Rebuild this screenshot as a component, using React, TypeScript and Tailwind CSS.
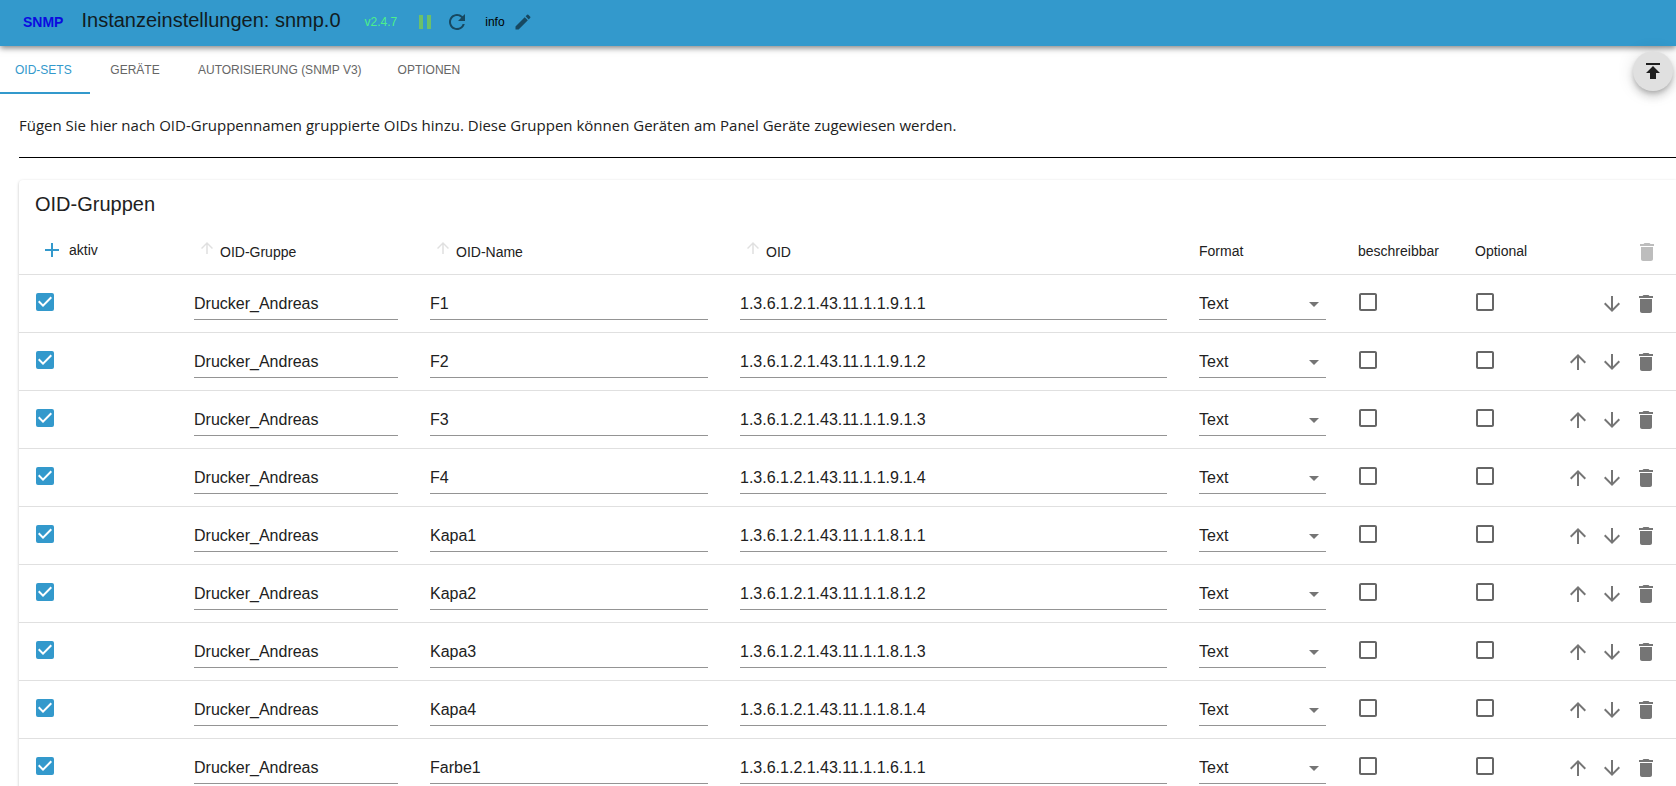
import React, { useState } from 'react';
import {
  MdAdd,
  MdArrowDownward,
  MdArrowDropDown,
  MdArrowUpward,
  MdCheckBox,
  MdCheckBoxOutlineBlank,
  MdDelete,
  MdEdit,
  MdPause,
  MdPublish,
  MdRefresh,
} from 'react-icons/md';

interface OidRow {
  id: number;
  active: boolean;
  group: string;
  name: string;
  oid: string;
  format: string;
  writable: boolean;
  optional: boolean;
}

const createRow = (id: number, name: string, oid: string): OidRow => ({
  id,
  active: true,
  group: 'Drucker_Andreas',
  name,
  oid,
  format: 'Text',
  writable: false,
  optional: false,
});

const INITIAL_ROWS: OidRow[] = [
  createRow(1, 'F1', '1.3.6.1.2.1.43.11.1.1.9.1.1'),
  createRow(2, 'F2', '1.3.6.1.2.1.43.11.1.1.9.1.2'),
  createRow(3, 'F3', '1.3.6.1.2.1.43.11.1.1.9.1.3'),
  createRow(4, 'F4', '1.3.6.1.2.1.43.11.1.1.9.1.4'),
  createRow(5, 'Kapa1', '1.3.6.1.2.1.43.11.1.1.8.1.1'),
  createRow(6, 'Kapa2', '1.3.6.1.2.1.43.11.1.1.8.1.2'),
  createRow(7, 'Kapa3', '1.3.6.1.2.1.43.11.1.1.8.1.3'),
  createRow(8, 'Kapa4', '1.3.6.1.2.1.43.11.1.1.8.1.4'),
  createRow(9, 'Farbe1', '1.3.6.1.2.1.43.11.1.1.6.1.1'),
];

const TABS = ['OID-Sets', 'Geräte', 'Autorisierung (SNMP v3)', 'Optionen'];

interface CheckboxCellProps {
  label: string;
  checked: boolean;
  onChange: (checked: boolean) => void;
}

const CheckboxCell: React.FC<CheckboxCellProps> = ({ label, checked, onChange }) => (
  <td className="border-b border-[#e0e0e0] pt-[15px] pl-[14px] align-top">
    <label className="grid size-6 cursor-pointer">
      <input
        type="checkbox"
        aria-label={label}
        checked={checked}
        onChange={(e) => onChange(e.target.checked)}
        className="col-start-1 row-start-1 size-6 cursor-pointer appearance-none"
      />
      {checked ? (
        <MdCheckBox className="pointer-events-none col-start-1 row-start-1 size-6 text-[#3399cc]" />
      ) : (
        <MdCheckBoxOutlineBlank className="pointer-events-none col-start-1 row-start-1 size-6 text-[#666666]" />
      )}
    </label>
  </td>
);

interface TextCellProps {
  label: string;
  value: string;
  onChange: (value: string) => void;
}

const TextCell: React.FC<TextCellProps> = ({ label, value, onChange }) => (
  <td className="border-b border-[#e0e0e0] px-4 pt-[13px] pb-3">
    <input
      type="text"
      aria-label={label}
      value={value}
      onChange={(e) => onChange(e.target.value)}
      className="block h-8 w-full border-b border-[#949494] bg-transparent text-base outline-none focus:border-[#3399cc]"
    />
  </td>
);

interface IconButtonProps {
  label: string;
  onClick?: () => void;
  disabled?: boolean;
  children: React.ReactNode;
}

const IconButton: React.FC<IconButtonProps> = ({ label, onClick, disabled, children }) => (
  <button
    type="button"
    aria-label={label}
    onClick={onClick}
    disabled={disabled}
    className="flex h-8 w-[34px] items-center justify-center text-[#757575] disabled:text-[#bdbdbd]"
  >
    {children}
  </button>
);

const SortHeader: React.FC<{ label: string }> = ({ label }) => (
  <th className="border-b border-[#e0e0e0] pt-1.5 pr-4 pl-5 font-normal">
    <button type="button" className="flex items-center gap-1">
      <MdArrowUpward className="mb-2 size-[18px] text-[#e0e0e0]" />
      <span>{label}</span>
    </button>
  </th>
);

const App: React.FC = () => {
  const [rows, setRows] = useState<OidRow[]>(INITIAL_ROWS);
  const [activeTab, setActiveTab] = useState(TABS[0]);

  const updateRow = (id: number, patch: Partial<OidRow>) => {
    setRows((prev) => prev.map((row) => (row.id === id ? { ...row, ...patch } : row)));
  };

  const moveRow = (index: number, delta: number) => {
    setRows((prev) => {
      const next = [...prev];
      const [row] = next.splice(index, 1);
      next.splice(index + delta, 0, row);
      return next;
    });
  };

  const addRow = () => {
    setRows((prev) => [...prev, createRow(Date.now(), '', '')]);
  };

  const deleteRow = (id: number) => {
    setRows((prev) => prev.filter((row) => row.id !== id));
  };

  return (
    <div className="flex h-screen flex-col overflow-hidden bg-white font-['Liberation_Sans',Arial,sans-serif] text-[#212121]">
      {/* Title bar */}
      <header className="z-10 flex h-[46px] shrink-0 items-center bg-[#3399cc] pb-1.5 pl-[23px] shadow-[0_2px_6px_rgba(0,0,0,0.5)]">
        <span className="pt-1 text-sm font-bold text-[#0b0be0]">SNMP</span>
        <h1 className="ml-[18px] text-xl text-[#111c22]">Instanzeinstellungen: snmp.0</h1>
        <div className="ml-6 flex items-center pt-1 text-xs">
          <span className="text-[#4df08a]">v2.4.7</span>
          <button type="button" aria-label="Pause" className="ml-4">
            <MdPause className="size-6 text-[#6cc069]" />
          </button>
          <button type="button" aria-label="Neu starten" className="ml-2">
            <MdRefresh className="size-6 text-[#174860]" />
          </button>
          <span className="ml-4 text-black">info</span>
          <button type="button" aria-label="Bearbeiten" className="ml-2">
            <MdEdit className="size-5 text-[#174860]" />
          </button>
        </div>
      </header>

      {/* Tabs */}
      <nav role="tablist" className="flex h-12 shrink-0">
        {TABS.map((tab) => (
          <button
            key={tab}
            type="button"
            role="tab"
            aria-selected={activeTab === tab}
            onClick={() => setActiveTab(tab)}
            className="min-w-[90px] border-b-2 border-transparent px-[18px] pt-0.5 text-xs text-[#666666] uppercase first:px-[15px] first:text-left aria-selected:border-[#3399cc] aria-selected:text-[#3399cc]"
          >
            {tab}
          </button>
        ))}
      </nav>

      <button
        type="button"
        aria-label="Nach oben"
        className="fixed top-[51px] right-[3px] z-20 flex size-10 items-center justify-center rounded-full bg-[#e0e0e0] text-[#1f1f1f] shadow-[0_3px_5px_-1px_rgba(0,0,0,0.2),0_6px_10px_rgba(0,0,0,0.14),0_1px_18px_rgba(0,0,0,0.12)]"
      >
        <MdPublish className="size-6" />
      </button>

      <main className="min-h-0 flex-1 overflow-hidden pl-[19px]">
        <p className="border-b border-black pt-[19px] pb-5 font-['Open_Sans','Noto_Sans',sans-serif] text-[15px] leading-6">
          Fügen Sie hier nach OID-Gruppennamen gruppierte OIDs hinzu. Diese Gruppen können Geräten am Panel Geräte
          zugewiesen werden.
        </p>

        <section className="mt-[22px] rounded-tl shadow-[0_1px_3px_rgba(0,0,0,0.25)]">
          <h2 className="px-4 pt-2 pb-1 text-xl leading-8">OID-Gruppen</h2>

          <table className="w-full table-fixed border-separate border-spacing-0 text-left">
            <colgroup>
              <col className="w-[159px]" />
              <col className="w-[236px]" />
              <col className="w-[310px]" />
              <col />
              <col className="w-[159px]" />
              <col className="w-[117px]" />
              <col className="w-[100px]" />
              <col className="w-[117px]" />
            </colgroup>
            <thead>
              <tr className="h-[51px] text-sm">
                <th className="border-b border-[#e0e0e0] pt-0.5 pl-[21px] font-normal">
                  <div className="flex items-center gap-[5px]">
                    <button type="button" aria-label="Hinzufügen" onClick={addRow}>
                      <MdAdd className="size-6 text-[#3399cc]" />
                    </button>
                    <span>aktiv</span>
                  </div>
                </th>
                <SortHeader label="OID-Gruppe" />
                <SortHeader label="OID-Name" />
                <SortHeader label="OID" />
                <th className="border-b border-[#e0e0e0] px-4 pt-1 font-normal">Format</th>
                <th className="border-b border-[#e0e0e0] px-4 pt-1 font-normal">beschreibbar</th>
                <th className="border-b border-[#e0e0e0] px-4 pt-1 font-normal">Optional</th>
                <th className="border-b border-[#e0e0e0] pt-1.5 pr-3">
                  <div className="flex justify-end">
                    <IconButton label="Alle löschen" disabled>
                      <MdDelete className="size-6" />
                    </IconButton>
                  </div>
                </th>
              </tr>
            </thead>
            <tbody>
              {rows.map((row, index) => (
                <tr key={row.id}>
                  <CheckboxCell
                    label="aktiv"
                    checked={row.active}
                    onChange={(active) => updateRow(row.id, { active })}
                  />
                  <TextCell label="OID-Gruppe" value={row.group} onChange={(group) => updateRow(row.id, { group })} />
                  <TextCell label="OID-Name" value={row.name} onChange={(name) => updateRow(row.id, { name })} />
                  <TextCell label="OID" value={row.oid} onChange={(oid) => updateRow(row.id, { oid })} />
                  <td className="border-b border-[#e0e0e0] px-4 pt-[13px] pb-3">
                    <div className="grid items-center border-b border-[#949494]">
                      <select
                        aria-label="Format"
                        value={row.format}
                        onChange={(e) => updateRow(row.id, { format: e.target.value })}
                        className="col-start-1 row-start-1 h-[31px] w-full appearance-none bg-transparent text-base outline-none"
                      >
                        <option>Text</option>
                        <option>Numerisch</option>
                        <option>Boolean</option>
                        <option>JSON</option>
                        <option>Auto</option>
                      </select>
                      <MdArrowDropDown className="pointer-events-none col-start-1 row-start-1 size-6 justify-self-end text-[#757575]" />
                    </div>
                  </td>
                  <CheckboxCell
                    label="beschreibbar"
                    checked={row.writable}
                    onChange={(writable) => updateRow(row.id, { writable })}
                  />
                  <CheckboxCell
                    label="Optional"
                    checked={row.optional}
                    onChange={(optional) => updateRow(row.id, { optional })}
                  />
                  <td className="border-b border-[#e0e0e0] pt-[13px] pr-[13px] pb-3">
                    <div className="flex justify-end">
                      {index > 0 && (
                        <IconButton label="Nach oben verschieben" onClick={() => moveRow(index, -1)}>
                          <MdArrowUpward className="size-6" />
                        </IconButton>
                      )}
                      <IconButton label="Nach unten verschieben" onClick={() => moveRow(index, 1)}>
                        <MdArrowDownward className="size-6" />
                      </IconButton>
                      <IconButton label="Löschen" onClick={() => deleteRow(row.id)}>
                        <MdDelete className="size-6" />
                      </IconButton>
                    </div>
                  </td>
                </tr>
              ))}
            </tbody>
          </table>
        </section>
      </main>
    </div>
  );
};

export default App;
